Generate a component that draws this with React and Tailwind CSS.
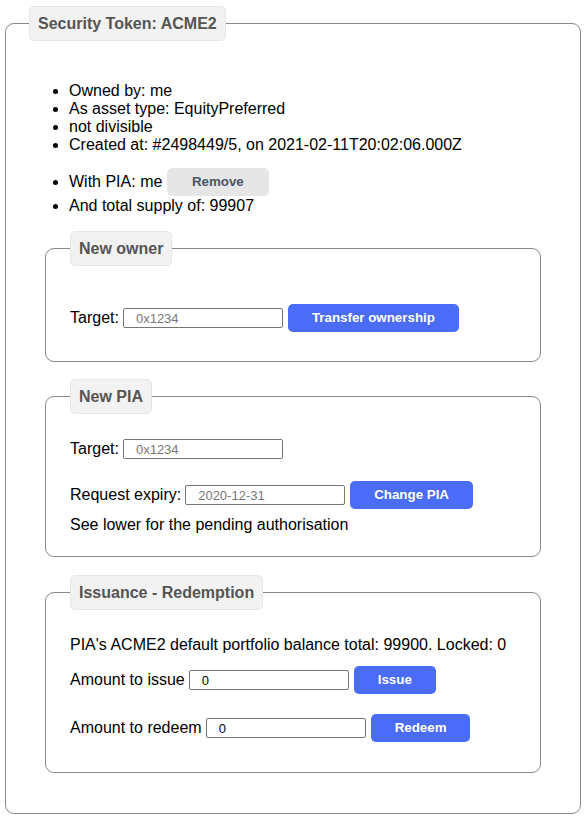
const font = { fontFamily: '"Liberation Sans", Arial, sans-serif' };

function Legend({ children }) {
  return (
    <legend className="px-[8px] py-[7px] leading-[19px] text-[16px] font-bold text-[#555] bg-[#f2f2f2] border border-[#e6e6e6] rounded-[5px]">
      {children}
    </legend>
  );
}

function BlueButton({ children }) {
  return (
    <button className="ml-[5px] h-[28px] px-6 rounded-[5px] bg-[#4a6cf6] text-white text-[13.33px] font-bold leading-[16px]">
      {children}
    </button>
  );
}

function TextInput({ placeholder, value }) {
  return (
    <input
      className="ml-[4px] w-[160px] h-[20px] pl-[12px] text-[13px] text-black placeholder:text-[#777] border border-[#767676] rounded-[2px] bg-white outline-none"
      placeholder={placeholder}
      defaultValue={value}
    />
  );
}

function Row({ label, children, className = '' }) {
  return (
    <div className={`flex items-center h-[28px] ${className}`}>
      <span className="leading-[18px]">{label}</span>
      {children}
    </div>
  );
}

export default function App() {
  return (
    <div style={font} className="text-[16px] text-black bg-white min-h-[819px] pt-[6px]">
      <fieldset className="ml-[5px] w-[576px] border border-[#888] rounded-[9px] px-[23px] pb-[40px]">
        <Legend>Security Token: ACME2</Legend>

        <ul className="list-disc pl-10 mt-[41px] leading-[18px]">
          <li>Owned by: me</li>
          <li>As asset type: EquityPreferred</li>
          <li>not divisible</li>
          <li>Created at: #2498449/5, on 2021-02-11T20:02:06.000Z</li>
        </ul>

        <ul className="list-disc pl-10 mt-[14px] leading-[18px]">
          <li className="h-[29px] leading-[28px]">
            With PIA: me{' '}
            <button className="align-top w-[102px] h-[28px] rounded-[5px] bg-[#e6e6e6] text-[#4a5568] text-[13.33px] font-bold leading-[16px]">
              Remove
            </button>
          </li>
          <li>And total supply of: 99907</li>
        </ul>

        {/* New owner */}
        <fieldset className="mx-4 mt-[16px] border border-[#888] rounded-[9px] px-[24px] pt-[38px] pb-[29px]">
          <Legend>New owner</Legend>
          <Row label="Target:">
            <TextInput placeholder="0x1234" />
            <BlueButton>Transfer ownership</BlueButton>
          </Row>
        </fieldset>

        {/* New PIA */}
        <fieldset className="mx-4 mt-[17px] border border-[#888] rounded-[9px] px-[24px] pt-[21px] pb-[22px]">
          <Legend>New PIA</Legend>
          <Row label="Target:">
            <TextInput placeholder="0x1234" />
          </Row>
          <Row label="Request expiry:" className="mt-[18px]">
            <TextInput placeholder="2020-12-31" />
            <BlueButton>Change PIA</BlueButton>
          </Row>
          <div className="mt-[7px] leading-[18px]">See lower for the pending authorisation</div>
        </fieldset>

        {/* Issuance - Redemption */}
        <fieldset className="mx-4 mt-[18px] border border-[#888] rounded-[9px] px-[24px] pt-[26px] pb-[30px]">
          <Legend>Issuance - Redemption</Legend>
          <div className="leading-[18px]">PIA's ACME2 default portfolio balance total: 99900. Locked: 0</div>
          <Row label="Amount to issue" className="mt-[12px]">
            <TextInput value="0" />
            <BlueButton>Issue</BlueButton>
          </Row>
          <Row label="Amount to redeem" className="mt-[20px]">
            <TextInput value="0" />
            <BlueButton>Redeem</BlueButton>
          </Row>
        </fieldset>
      </fieldset>
    </div>
  );
}
